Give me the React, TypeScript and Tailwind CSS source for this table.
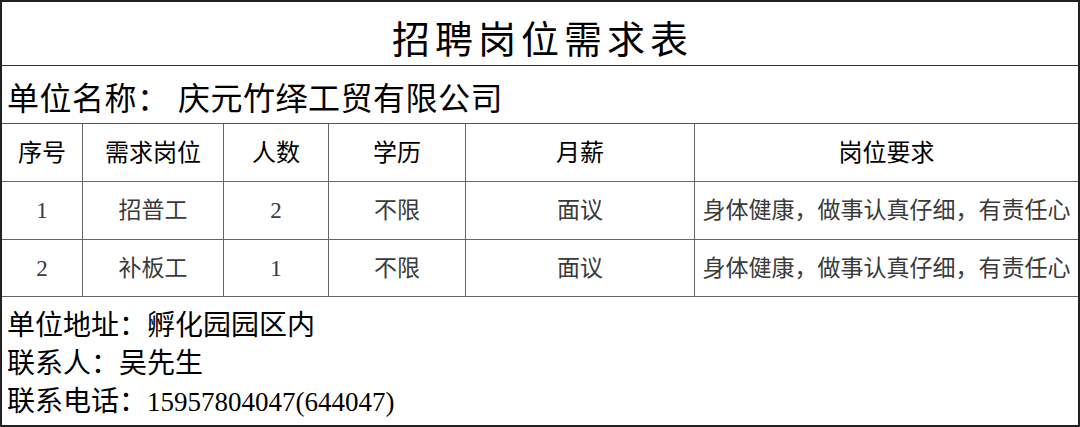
import React from "react";

const font = { fontFamily: '"Liberation Serif", "Noto Sans CJK SC", serif' };

const headers = ["序号", "需求岗位", "人数", "学历", "月薪", "岗位要求"];
const rows = [
  ["1", "招普工", "2", "不限", "面议", "身体健康，做事认真仔细，有责任心"],
  ["2", "补板工", "1", "不限", "面议", "身体健康，做事认真仔细，有责任心"],
];

export default function App() {
  return (
    <div
      className="w-[1080px] h-[427px] bg-white text-black border-2 border-[#222] flex flex-col overflow-hidden"
      style={font}
    >
      <div className="h-[64px] border-b border-[#333] flex items-center justify-center pt-[12px] shrink-0">
        <span className="text-[38px] tracking-[5px] leading-none pl-[5px]">招聘岗位需求表</span>
      </div>
      <div className="h-[58px] border-b border-[#555] flex items-center pl-[5px] pt-[8px] shrink-0">
        <span className="text-[32px] tracking-[0.5px] leading-none">单位名称： 庆元竹绎工贸有限公司</span>
      </div>
      <div className="grid grid-cols-[81px_141px_105px_137px_229px_1fr] shrink-0">
        {headers.map((h, i) => (
          <div
            key={h}
            className={`h-[58px] border-b border-[#666] flex items-center justify-center text-[24px] leading-none ${
              i < 5 ? "border-r" : ""
            }`}
          >
            {h}
          </div>
        ))}
        {rows.map((r, ri) =>
          r.map((c, i) => (
            <div
              key={ri + "-" + i}
              className={`${ri === 0 ? "h-[58px]" : "h-[57px]"} border-b border-[#666] flex items-center justify-center text-[23px] leading-none text-[#3a3a3a] ${
                i < 5 ? "border-r" : ""
              }`}
            >
              {c}
            </div>
          ))
        )}
      </div>
      <div className="flex-1 flex flex-col pl-[5px] pt-[10px] text-[28px] leading-[38px]">
        <div>单位地址：孵化园园区内</div>
        <div>联系人：吴先生</div>
        <div>联系电话：<span className="text-[27px]">15957804047(644047)</span></div>
      </div>
    </div>
  );
}
